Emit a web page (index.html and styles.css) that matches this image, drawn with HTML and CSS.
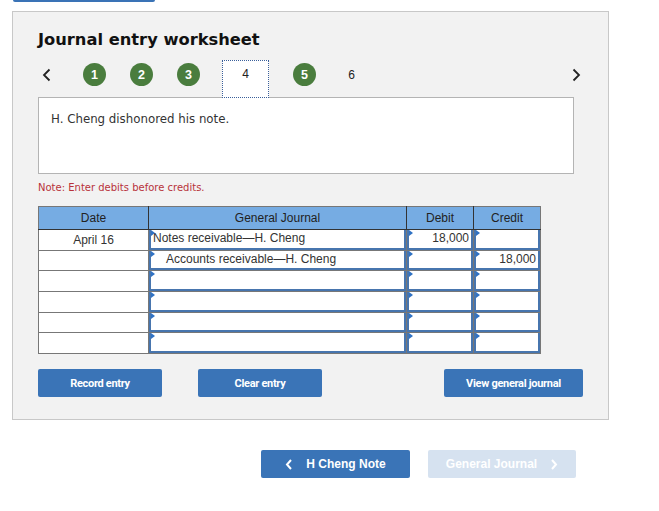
FILE: index.html
```html
<!DOCTYPE html>
<html>
  <head>
    <meta charset="utf-8">
    <title>Journal entry worksheet</title>
    <link rel="stylesheet" href="styles.css">
  </head>
  <body>
    <div class="top-stub"></div>

    <div class="panel">
      <h1 class="title">Journal entry worksheet</h1>

      <!-- step navigation -->
      <div class="steps">
        <span class="arrow">
          <svg width="9" height="14" viewBox="0 0 9 14"><path d="M7.5 1.5 L2 7 L7.5 12.5" fill="none" stroke="#222" stroke-width="1.8"/></svg>
        </span>
        <span class="step done">1</span>
        <span class="step done">2</span>
        <span class="step done">3</span>
        <span class="step current">4</span>
        <span class="step done">5</span>
        <span class="step">6</span>
        <span class="arrow right">
          <svg width="9" height="14" viewBox="0 0 9 14"><path d="M1.5 1.5 L7 7 L1.5 12.5" fill="none" stroke="#222" stroke-width="1.8"/></svg>
        </span>
      </div>

      <div class="prompt">H. Cheng dishonored his note.</div>

      <p class="note">Note: Enter debits before credits.</p>

      <table class="journal">
        <thead>
          <tr>
            <th class="c-date">Date</th>
            <th class="c-acct">General Journal</th>
            <th class="c-amt">Debit</th>
            <th class="c-amt">Credit</th>
          </tr>
        </thead>
        <tbody>
          <tr>
            <td class="date">April 16</td>
            <td><div class="fld">Notes receivable—H. Cheng</div></td>
            <td><div class="fld num">18,000</div></td>
            <td><div class="fld num"></div></td>
          </tr>
          <tr>
            <td class="date"></td>
            <td><div class="fld indent">Accounts receivable—H. Cheng</div></td>
            <td><div class="fld num"></div></td>
            <td><div class="fld num">18,000</div></td>
          </tr>
          <tr>
            <td class="date"></td>
            <td><div class="fld"></div></td>
            <td><div class="fld num"></div></td>
            <td><div class="fld num"></div></td>
          </tr>
          <tr>
            <td class="date"></td>
            <td><div class="fld"></div></td>
            <td><div class="fld num"></div></td>
            <td><div class="fld num"></div></td>
          </tr>
          <tr>
            <td class="date"></td>
            <td><div class="fld"></div></td>
            <td><div class="fld num"></div></td>
            <td><div class="fld num"></div></td>
          </tr>
          <tr>
            <td class="date"></td>
            <td><div class="fld"></div></td>
            <td><div class="fld num"></div></td>
            <td><div class="fld num"></div></td>
          </tr>
        </tbody>
      </table>

      <div class="actions">
        <button class="btn">Record entry</button>
        <button class="btn">Clear entry</button>
        <button class="btn wide">View general journal</button>
      </div>
    </div>

    <div class="pager">
      <button class="page-btn">
        <svg width="8" height="11" viewBox="0 0 8 11"><path d="M6 1 L2 5.5 L6 10" fill="none" stroke="#fff" stroke-width="2"/></svg>
        <span>H Cheng Note</span>
      </button>
      <button class="page-btn disabled">
        <span>General Journal</span>
        <svg width="8" height="11" viewBox="0 0 8 11"><path d="M2 1 L6 5.5 L2 10" fill="none" stroke="#fff" stroke-width="2"/></svg>
      </button>
    </div>
  </body>
</html>
```

FILE: styles.css
```css
body {
  margin: 0;
  background: #fff;
  font-family: "Liberation Sans", Arial, sans-serif;
  color: #222;
}

.top-stub {
  width: 142px;
  height: 2px;
  margin-left: 13px;
  background: #3a73b6;
  border-radius: 0 0 3px 3px;
}

.panel {
  box-sizing: border-box;
  width: 597px;
  height: 409px;
  margin: 9px 0 0 12px;
  padding: 0 0 0 25px;
  background: #f2f2f2;
  border: 1px solid #c8c8c8;
}

.title {
  margin: 18px 0 0 0;
  font-family: "DejaVu Sans", Verdana, sans-serif;
  font-size: 16.3px;
  font-weight: bold;
  line-height: 20px;
  color: #111;
}

/* step navigation */
.steps {
  display: flex;
  align-items: flex-start;
  height: 37px;
  margin-top: 10px;
  font-family: "Liberation Sans", Arial, sans-serif;
  font-size: 12px;
}
.arrow {
  display: flex;
  align-items: center;
  height: 24px;
  margin: 3px 0 0 4px;
}
.arrow.right {
  margin-left: 209px;
}
.step {
  display: flex;
  align-items: center;
  justify-content: center;
  width: 23px;
  height: 23px;
  margin: 3px 0 0 24px;
  color: #222;
}
.steps .arrow + .step {
  margin-left: 32px;
}
.step.done {
  background: #4a7d3e;
  color: #fff;
  border-radius: 50%;
  font-weight: bold;
  font-size: 12.5px;
}
.step.current {
  box-sizing: border-box;
  width: 47px;
  height: 38px;
  margin: 0 0 0 22px;
  align-items: flex-start;
  padding-top: 6px;
  background: #fff;
  border: 1px dotted #3a5f9a;
  position: relative;
  z-index: 1;
}

.prompt {
  box-sizing: border-box;
  width: 536px;
  height: 77px;
  padding: 14px 12px;
  background: #fff;
  border: 1px solid #b4b4b4;
  font-family: "DejaVu Sans", Verdana, sans-serif;
  font-size: 11.8px;
  color: #333;
}

.note {
  margin: 8px 0 0 0;
  font-family: "DejaVu Sans", Verdana, sans-serif;
  font-size: 10px;
  line-height: 12px;
  color: #b8323a;
}

/* journal table */
.journal {
  margin-top: 12px;
  border-collapse: collapse;
  border: 1px solid #777;
  font-size: 12px;
  background: #fff;
}
.journal th {
  height: 22px;
  padding: 0;
  background: #76ace3;
  border: 1px solid #333;
  border-top-color: #777;
  font-weight: normal;
  color: #222;
}
.journal th:first-child { border-left-color: #777; }
.journal th:last-child { border-right-color: #777; }
.c-date { width: 109px; }
.c-acct { width: 257px; }
.c-amt { width: 66px; }

.journal td {
  height: 19.7px;
  padding: 0;
  border: 1px solid #777;
}
.journal td.date {
  text-align: center;
  color: #333;
}

.fld {
  position: relative;
  box-sizing: border-box;
  height: 19.7px;
  padding: 1px 2px 0 2px;
  border-left: 2px solid #4775ae;
  border-bottom: 2px solid #4775ae;
  border-right: 2px solid #4775ae;
  color: #333;
  white-space: nowrap;
}
.fld::before {
  content: "";
  position: absolute;
  left: 0;
  top: 0;
  border-left: 4px solid #2f72c4;
  border-top: 3px solid transparent;
  border-bottom: 3px solid transparent;
}
.fld.num { text-align: right; }
.fld.indent { padding-left: 15px; }

/* buttons */
.actions {
  display: flex;
  margin-top: 15px;
}
.btn {
  width: 124px;
  height: 28px;
  margin-right: 36px;
  padding: 0;
  background: #3a74b7;
  border: none;
  border-radius: 2px;
  color: #fff;
  font-family: Roboto, "Liberation Sans", sans-serif;
  font-size: 11px;
  font-weight: bold;
  letter-spacing: -0.3px;
}
.btn.wide {
  width: 139px;
  margin-left: 86px;
  margin-right: 0;
}

.pager {
  display: flex;
  gap: 18px;
  margin: 30px 0 0 261px;
}
.page-btn {
  display: flex;
  align-items: center;
  justify-content: center;
  gap: 13px;
  width: 149px;
  height: 28px;
  padding: 0;
  background: #3a74b7;
  border: none;
  border-radius: 2px;
  color: #fff;
  font-family: "Liberation Sans", Arial, sans-serif;
  font-size: 12px;
  font-weight: bold;
}
.page-btn.disabled {
  width: 148px;
  background: #d6e2f0;
}
```
